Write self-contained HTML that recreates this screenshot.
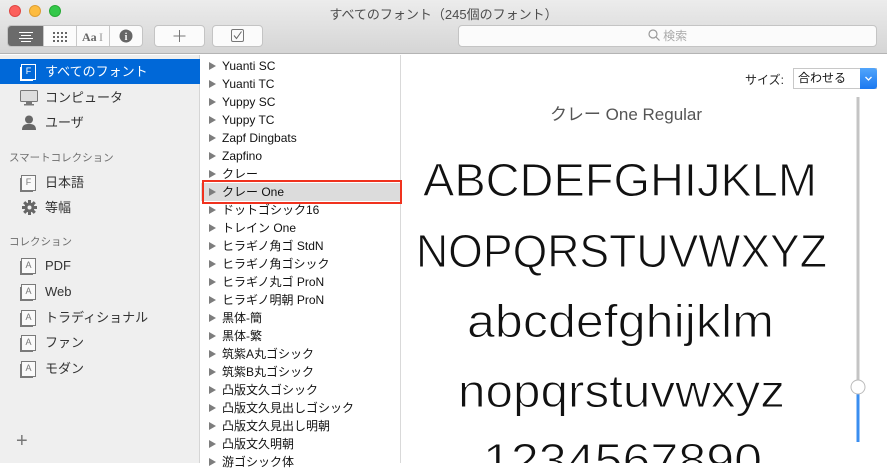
<!DOCTYPE html>
<html><head><meta charset="utf-8"><style>
*{margin:0;padding:0;box-sizing:border-box}
body{width:887px;height:463px;overflow:hidden;background:#fff;font-family:"Liberation Sans","Noto Sans CJK JP",sans-serif;position:relative}
.tb{position:absolute;left:0;top:0;width:887px;height:54px;background:linear-gradient(#ececec,#d5d5d5);border-bottom:1px solid #b4b4b4}
.title{position:absolute;top:4px;left:0;width:887px;text-align:center;font-size:13px;color:#4d4d4d}
.dot{position:absolute;top:5px;width:12px;height:12px;border-radius:50%}
.btn{position:absolute;top:25px;height:22px;background:#fbfbfb;border:1px solid #c4c4c4;border-radius:4px}
.side{position:absolute;left:0;top:55px;width:200px;height:408px;background:#efefef;border-right:1px solid #d5d5d5}
.si{position:absolute;left:0;width:200px;height:25px;font-size:13px;color:#333;line-height:25px;padding-left:45px}
.hd{position:absolute;left:9px;font-size:10.5px;color:#6e6e6e}
.ic{position:absolute;left:21px;top:5px;width:15px;height:16px;border:1px solid #7a7a7a;background:#fafafa;font-size:9px;line-height:13px;text-align:center;color:#777;box-shadow:-2px 2px 0 -1px #7a7a7a}
.list{position:absolute;left:201px;top:55px;width:200px;height:408px;background:#fff;border-right:1px solid #d9d9d9}
.r{position:absolute;left:0;width:200px;height:18px;line-height:18px;font-size:12px;color:#111;padding-left:21px}
.r:before{content:"";position:absolute;left:8px;top:5px;border-left:7px solid #7d7d7d;border-top:4px solid transparent;border-bottom:4px solid transparent}
</style></head><body>
<div class="tb">
<div class="dot" style="left:9px;background:#fc605c;border:1px solid #df4744"></div>
<div class="dot" style="left:29px;background:#fdbc40;border:1px solid #de9f34"></div>
<div class="dot" style="left:49px;background:#34c84a;border:1px solid #27aa35"></div>
<div class="title">すべてのフォント（245個のフォント）</div>
<div class="btn" style="left:7px;width:136px;overflow:hidden">
 <div style="position:absolute;left:0;top:0;width:35px;height:20px;background:#6b6b6b"></div>
 <svg style="position:absolute;left:0;top:0" width="136" height="20"><g stroke="#fff" stroke-width="1"><line x1="11" y1="6.5" x2="25" y2="6.5"/><line x1="13" y1="9.5" x2="23" y2="9.5"/><line x1="11" y1="12.5" x2="25" y2="12.5"/><line x1="13" y1="15.5" x2="23" y2="15.5"/></g>
 <line x1="35.5" y1="0" x2="35.5" y2="20" stroke="#c8c8c8"/><line x1="68.5" y1="0" x2="68.5" y2="20" stroke="#c8c8c8"/><line x1="101.5" y1="0" x2="101.5" y2="20" stroke="#c8c8c8"/>
 <g fill="#666"><rect x="45" y="6" width="2" height="2"/><rect x="49" y="6" width="2" height="2"/><rect x="53" y="6" width="2" height="2"/><rect x="57" y="6" width="2" height="2"/><rect x="45" y="10" width="2" height="2"/><rect x="49" y="10" width="2" height="2"/><rect x="53" y="10" width="2" height="2"/><rect x="57" y="10" width="2" height="2"/><rect x="45" y="14" width="2" height="2"/><rect x="49" y="14" width="2" height="2"/><rect x="53" y="14" width="2" height="2"/><rect x="57" y="14" width="2" height="2"/></g>
 <text x="74" y="15" font-size="12" font-weight="bold" fill="#666" font-family="Liberation Serif">Aa</text><text x="91" y="15" font-size="12" fill="#999" font-family="Liberation Serif">I</text>
 <circle cx="118" cy="10" r="6.5" fill="#666"/><text x="118" y="14" font-size="10" font-weight="bold" fill="#fff" text-anchor="middle" font-family="Liberation Serif">i</text></svg>
</div>
<div class="btn" style="left:154px;width:51px"><svg width="49" height="20"><path d="M24.5 4v12M18.5 10h12" stroke="#777"/></svg></div>
<div class="btn" style="left:212px;width:51px"><svg width="49" height="20"><rect x="18.5" y="3.5" width="12" height="12" rx="1.5" fill="none" stroke="#777"/><path d="M21 9.5l2.5 3 5-7" stroke="#666" fill="none"/></svg></div>
<div class="btn" style="left:458px;width:419px;text-align:center;font-size:12px;color:#aaa;line-height:20px"><svg width="12" height="12" style="vertical-align:-1px"><circle cx="5" cy="5" r="4" stroke="#999" fill="none" stroke-width="1.2"/><path d="M8 8l3.5 3.5" stroke="#999" stroke-width="1.2"/></svg> 検索</div>
</div>

<div class="side">
<div class="si" style="top:4px;background:#0068d8;color:#fff"><div class="ic" style="border-color:#fff;background:#0068d8;color:#fff;box-shadow:-2px 2px 0 -1px #fff">F</div>すべてのフォント</div>
<div class="si" style="top:30px"><svg style="position:absolute;left:20px;top:5px" width="18" height="16"><rect x="0.5" y="0.5" width="17" height="11" rx="1" fill="#ddd" stroke="#777"/><rect x="6" y="12" width="6" height="2" fill="#777"/><rect x="4" y="14" width="10" height="1.5" fill="#777"/></svg>コンピュータ</div>
<div class="si" style="top:55px"><svg style="position:absolute;left:22px;top:5px" width="14" height="15"><circle cx="7" cy="4.5" r="4" fill="#666"/><path d="M0 15c0-5 3-6 7-6s7 1 7 6z" fill="#666"/></svg>ユーザ</div>
<div class="hd" style="top:95px">スマートコレクション</div>
<div class="si" style="top:115px"><div class="ic">F</div>日本語</div>
<div class="si" style="top:140px"><svg style="position:absolute;left:21px;top:4px" width="17" height="17"><g stroke="#666" stroke-width="3"><path d="M8.5 1v15M1 8.5h15M3.2 3.2l10.6 10.6M13.8 3.2L3.2 13.8"/></g><circle cx="8.5" cy="8.5" r="5" fill="#666"/><circle cx="8.5" cy="8.5" r="2" fill="#efefef"/></svg>等幅</div>
<div class="hd" style="top:179px">コレクション</div>
<div class="si" style="top:198px"><div class="ic">A</div>PDF</div>
<div class="si" style="top:224px"><div class="ic">A</div>Web</div>
<div class="si" style="top:250px"><div class="ic">A</div>トラディショナル</div>
<div class="si" style="top:275px"><div class="ic">A</div>ファン</div>
<div class="si" style="top:301px"><div class="ic">A</div>モダン</div>
<div style="position:absolute;left:16px;top:375px;font-size:20px;color:#777;font-weight:300">+</div>
</div>

<div class="list">
<div class="r" style="top:2px">Yuanti SC</div>
<div class="r" style="top:20px">Yuanti TC</div>
<div class="r" style="top:38px">Yuppy SC</div>
<div class="r" style="top:56px">Yuppy TC</div>
<div class="r" style="top:74px">Zapf Dingbats</div>
<div class="r" style="top:92px">Zapfino</div>
<div class="r" style="top:110px">クレー</div>
<div class="r" style="top:128px;background:#dcdcdc">クレー One</div>
<div style="position:absolute;left:1px;top:125px;width:200px;height:24px;border:2px solid #f0321e"></div>
<div class="r" style="top:146px">ドットゴシック16</div>
<div class="r" style="top:164px">トレイン One</div>
<div class="r" style="top:182px">ヒラギノ角ゴ StdN</div>
<div class="r" style="top:200px">ヒラギノ角ゴシック</div>
<div class="r" style="top:218px">ヒラギノ丸ゴ ProN</div>
<div class="r" style="top:236px">ヒラギノ明朝 ProN</div>
<div class="r" style="top:254px">黒体-簡</div>
<div class="r" style="top:272px">黒体-繁</div>
<div class="r" style="top:290px">筑紫A丸ゴシック</div>
<div class="r" style="top:308px">筑紫B丸ゴシック</div>
<div class="r" style="top:326px">凸版文久ゴシック</div>
<div class="r" style="top:344px">凸版文久見出しゴシック</div>
<div class="r" style="top:362px">凸版文久見出し明朝</div>
<div class="r" style="top:380px">凸版文久明朝</div>
<div class="r" style="top:398px">游ゴシック体</div>
</div>

<div style="position:absolute;left:745px;top:71px;font-size:12px;color:#222">サイズ:</div>
<div style="position:absolute;left:793px;top:68px;width:84px;height:21px;border:1px solid #c8c8c8;background:#fff;font-size:12px;line-height:19px;padding-left:4px;color:#111">合わせる
<div style="position:absolute;right:-1px;top:-1px;width:17px;height:21px;background:linear-gradient(#52a5fb,#1a78f0);border-radius:0 3px 3px 0"><svg width="17" height="21"><path d="M5.5 9l3 3 3-3" stroke="#fff" fill="none" stroke-width="1.3"/></svg></div></div>
<div style="position:absolute;left:401px;top:100px;width:450px;text-align:center;font-size:17px;color:#555">クレー One Regular</div>

<svg style="position:absolute;left:0;top:0" width="887" height="463">
<g font-family="Liberation Sans" fill="#111" font-size="46" stroke="#fff" stroke-width="1">
<text x="423" y="196" textLength="394" lengthAdjust="spacingAndGlyphs">ABCDEFGHIJKLM</text>
<text x="416" y="267" textLength="411" lengthAdjust="spacingAndGlyphs">NOPQRSTUVWXYZ</text>
<text x="467" y="337" textLength="307" lengthAdjust="spacingAndGlyphs">abcdefghijklm</text>
<text x="458" y="407" textLength="327" lengthAdjust="spacingAndGlyphs">nopqrstuvwxyz</text>
<text x="483" y="476" textLength="279" lengthAdjust="spacingAndGlyphs">1234567890</text>
</g>
<line x1="858" y1="97" x2="858" y2="382" stroke="#c4c4c4" stroke-width="3"/>
<line x1="858" y1="392" x2="858" y2="442" stroke="#3a8ef0" stroke-width="3"/>
<circle cx="858" cy="387" r="7" fill="#fff" stroke="#bbb"/>
</svg>
</body></html>
